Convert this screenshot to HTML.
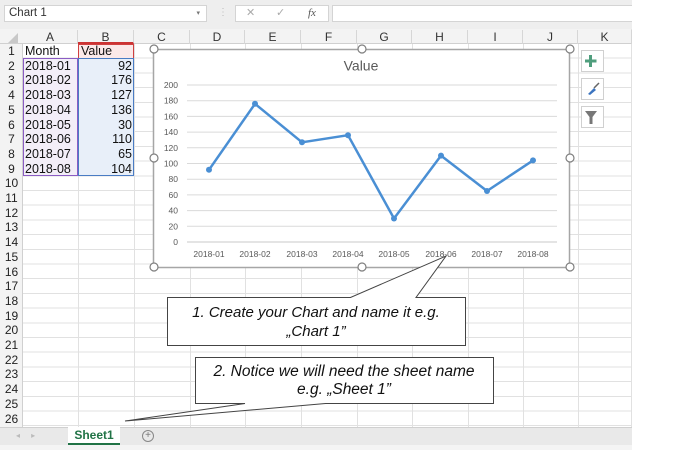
<!DOCTYPE html>
<html><head><meta charset="utf-8"><style>
*{margin:0;padding:0;box-sizing:border-box}
body{width:700px;height:450px;background:#fff;position:relative;overflow:hidden;font-family:"Liberation Sans",Arial,sans-serif}
.a{position:absolute}
.ch{position:absolute;top:30px;height:14px;font-size:12px;color:#333;text-align:center;line-height:14px;border-right:1px solid #d6d6d6}
.rh{position:absolute;left:0;width:23px;font-size:12px;color:#222;text-align:center;line-height:14.7px;height:14.7px}
.c{position:absolute;font-size:12.5px;color:#111;line-height:14.7px;height:14.7px}
</style></head><body>
<div class="a" style="left:0;top:0;width:632px;height:30px;background:#eeeeee"></div>
<div class="a" style="left:4px;top:5px;width:203px;height:17px;background:#fff;border:1px solid #d4d4d4;font-size:11.5px;line-height:15px;padding-left:4px;color:#333">Chart 1<span style="position:absolute;right:6px;font-size:7px;color:#777">▾</span></div>
<div class="a" style="left:218px;top:7px;font-size:10px;color:#bbb">⋮</div>
<div class="a" style="left:235px;top:5px;width:94px;height:17px;background:#fff;border:1px solid #d4d4d4;font-size:11px;color:#aaa;line-height:15px"><span style="position:absolute;left:10px">✕</span><span style="position:absolute;left:40px">✓</span><span style="position:absolute;left:72px;font-family:'Liberation Serif',serif;font-style:italic;color:#555">fx</span></div>
<div class="a" style="left:332px;top:5px;width:300px;height:17px;background:#fff;border:1px solid #d4d4d4;border-right:none"></div>
<div class="a" style="left:0;top:29px;width:632px;height:15px;background:#f3f3f3;border-bottom:1px solid #d0d0d0"></div>
<div class="a" style="left:0;top:44px;width:23px;height:383px;background:#f3f3f3;border-right:1px solid #d0d0d0"></div>
<div class="a" style="left:23px;top:44px;width:609px;height:383px;background-image:repeating-linear-gradient(to bottom,transparent 0,transparent 13.7px,#e1e1e1 13.7px,#e1e1e1 14.7px)"></div>
<div class="a" style="left:78px;top:44px;width:1px;height:383px;background:#e1e1e1"></div>
<div class="a" style="left:134px;top:44px;width:1px;height:383px;background:#e1e1e1"></div>
<div class="a" style="left:190px;top:44px;width:1px;height:383px;background:#e1e1e1"></div>
<div class="a" style="left:245px;top:44px;width:1px;height:383px;background:#e1e1e1"></div>
<div class="a" style="left:301px;top:44px;width:1px;height:383px;background:#e1e1e1"></div>
<div class="a" style="left:357px;top:44px;width:1px;height:383px;background:#e1e1e1"></div>
<div class="a" style="left:412px;top:44px;width:1px;height:383px;background:#e1e1e1"></div>
<div class="a" style="left:468px;top:44px;width:1px;height:383px;background:#e1e1e1"></div>
<div class="a" style="left:523px;top:44px;width:1px;height:383px;background:#e1e1e1"></div>
<div class="a" style="left:578px;top:44px;width:1px;height:383px;background:#e1e1e1"></div>
<div class="a" style="left:631px;top:29px;width:1px;height:398px;background:#e1e1e1"></div>
<div class="a" style="left:8px;top:33px;width:0;height:0;border-left:10px solid transparent;border-bottom:10px solid #c8c8c8"></div>
<div class="ch" style="left:23px;width:55px">A</div><div class="ch" style="left:78px;width:56px;border-bottom:2px solid #c33">B</div>
<div class="ch" style="left:134px;width:56px">C</div><div class="ch" style="left:190px;width:55px">D</div>
<div class="ch" style="left:245px;width:56px">E</div><div class="ch" style="left:301px;width:56px">F</div>
<div class="ch" style="left:357px;width:55px">G</div><div class="ch" style="left:412px;width:56px">H</div>
<div class="ch" style="left:468px;width:55px">I</div><div class="ch" style="left:523px;width:55px">J</div>
<div class="ch" style="left:578px;width:54px">K</div>
<div class="rh" style="top:44px">1</div><div class="rh" style="top:58.7px">2</div><div class="rh" style="top:73.4px">3</div><div class="rh" style="top:88.1px">4</div><div class="rh" style="top:102.8px">5</div><div class="rh" style="top:117.5px">6</div><div class="rh" style="top:132.2px">7</div><div class="rh" style="top:146.9px">8</div><div class="rh" style="top:161.6px">9</div><div class="rh" style="top:176.3px">10</div><div class="rh" style="top:191px">11</div><div class="rh" style="top:205.7px">12</div><div class="rh" style="top:220.4px">13</div><div class="rh" style="top:235.1px">14</div><div class="rh" style="top:249.8px">15</div><div class="rh" style="top:264.5px">16</div><div class="rh" style="top:279.2px">17</div><div class="rh" style="top:293.9px">18</div><div class="rh" style="top:308.6px">19</div><div class="rh" style="top:323.3px">20</div><div class="rh" style="top:338px">21</div><div class="rh" style="top:352.7px">22</div><div class="rh" style="top:367.4px">23</div><div class="rh" style="top:382.1px">24</div><div class="rh" style="top:396.8px">25</div><div class="rh" style="top:411.5px">26</div>
<div class="a" style="left:23px;top:58px;width:55px;height:118px;background:#f3eef8;border:1px solid #8b5cc4"></div>
<div class="a" style="left:78px;top:44px;width:56px;height:15px;background:#fbe9e9;border:1px solid #d04040"></div>
<div class="a" style="left:78px;top:58px;width:56px;height:118px;background:#e8eff9;border:1px solid #4a7cc4"></div>
<div class="c" style="left:25px;top:44px">Month</div><div class="c" style="left:81px;top:44px">Value</div>
<div class="c" style="left:25px;top:58.7px">2018-01</div><div class="c" style="left:25px;top:73.4px">2018-02</div><div class="c" style="left:25px;top:88.1px">2018-03</div><div class="c" style="left:25px;top:102.8px">2018-04</div><div class="c" style="left:25px;top:117.5px">2018-05</div><div class="c" style="left:25px;top:132.2px">2018-06</div><div class="c" style="left:25px;top:146.9px">2018-07</div><div class="c" style="left:25px;top:161.6px">2018-08</div>
<div class="c" style="left:80px;width:52px;text-align:right;top:58.7px">92</div><div class="c" style="left:80px;width:52px;text-align:right;top:73.4px">176</div><div class="c" style="left:80px;width:52px;text-align:right;top:88.1px">127</div><div class="c" style="left:80px;width:52px;text-align:right;top:102.8px">136</div><div class="c" style="left:80px;width:52px;text-align:right;top:117.5px">30</div><div class="c" style="left:80px;width:52px;text-align:right;top:132.2px">110</div><div class="c" style="left:80px;width:52px;text-align:right;top:146.9px">65</div><div class="c" style="left:80px;width:52px;text-align:right;top:161.6px">104</div>
<svg class="a" style="left:0;top:0" width="700" height="450" font-family="Liberation Sans,Arial,sans-serif">
<rect x="153.5" y="49.5" width="416" height="218" fill="#fff" stroke="#a6a6a6" stroke-width="1.5"/>
<text x="361" y="70.5" font-size="14" fill="#595959" text-anchor="middle">Value</text>
<g stroke="#dadada" stroke-width="1">
<line x1="187" x2="557" y1="85" y2="85"/><line x1="187" x2="557" y1="100.7" y2="100.7"/><line x1="187" x2="557" y1="116.4" y2="116.4"/><line x1="187" x2="557" y1="132.1" y2="132.1"/><line x1="187" x2="557" y1="147.8" y2="147.8"/><line x1="187" x2="557" y1="163.5" y2="163.5"/><line x1="187" x2="557" y1="179.2" y2="179.2"/><line x1="187" x2="557" y1="194.9" y2="194.9"/><line x1="187" x2="557" y1="210.6" y2="210.6"/><line x1="187" x2="557" y1="226.3" y2="226.3"/><line x1="187" x2="557" y1="242" y2="242" stroke="#c8c8c8"/>
</g>
<g font-size="8.5" fill="#595959" text-anchor="end">
<text x="178" y="88">200</text><text x="178" y="103.7">180</text><text x="178" y="119.4">160</text><text x="178" y="135.1">140</text><text x="178" y="150.8">120</text><text x="178" y="166.5">100</text><text x="178" y="182.2">80</text><text x="178" y="197.9">60</text><text x="178" y="213.6">40</text><text x="178" y="229.3">20</text><text x="178" y="245">0</text>
</g>
<g font-size="8.5" fill="#595959" text-anchor="middle">
<text x="209" y="257">2018-01</text><text x="255" y="257">2018-02</text><text x="302" y="257">2018-03</text><text x="348" y="257">2018-04</text><text x="394" y="257">2018-05</text><text x="441" y="257">2018-06</text><text x="487" y="257">2018-07</text><text x="533" y="257">2018-08</text>
</g>
<polyline fill="none" stroke="#4a8fd4" stroke-width="2.5" stroke-linejoin="round" points="209,169.8 255,103.8 302,142.3 348,135.2 394,218.5 441,155.6 487,191 533,160.4"/>
<g fill="#4a8fd4"><circle cx="209" cy="169.8" r="3"/><circle cx="255" cy="103.8" r="3"/><circle cx="302" cy="142.3" r="3"/><circle cx="348" cy="135.2" r="3"/><circle cx="394" cy="218.5" r="3"/><circle cx="441" cy="155.6" r="3"/><circle cx="487" cy="191" r="3"/><circle cx="533" cy="160.4" r="3"/></g>
<g fill="#fff" stroke="#7f7f7f" stroke-width="1.2">
<circle cx="154" cy="49" r="4"/><circle cx="362" cy="49" r="4"/><circle cx="570" cy="49" r="4"/><circle cx="154" cy="158" r="4"/><circle cx="570" cy="158" r="4"/><circle cx="154" cy="267" r="4"/><circle cx="362" cy="267" r="4"/><circle cx="570" cy="267" r="4"/>
</g>
<g fill="#fff" stroke="#d0d0d0"><rect x="581.5" y="50.5" width="22" height="21"/><rect x="581.5" y="78.5" width="22" height="21"/><rect x="581.5" y="106.5" width="22" height="21"/></g>
<path d="M590.5 55v12M585 61h11.5" stroke="#4f9e7d" stroke-width="3"/>
<path d="M588 94l6-6 2 2-6 5z" fill="#3b74c0"/><path d="M594 88l5-5" stroke="#666" stroke-width="1.5"/>
<path d="M585 111h12l-4.5 6v7h-3v-7z" fill="#777"/>
<path d="M167.5 297.5h183L446 256l-30 41.5h49.5v48h-298z" fill="#fff" stroke="#444" stroke-width="1"/>
<path d="M195.5 357.5h298v46h-168L125 421l120-17.5h-49.5z" fill="#fff" stroke="#444" stroke-width="1"/>
<g font-size="15" font-style="italic" fill="#111" text-anchor="middle">
<text x="316" y="317">1. Create your Chart and name it e.g.</text>
<text x="316" y="336">„Chart 1”</text>
<text x="344" y="376" font-size="15.5">2. Notice we will need the sheet name</text>
<text x="344" y="394" font-size="15.5">e.g. „Sheet 1”</text>
</g>
</svg>
<div class="a" style="left:0;top:427px;width:632px;height:18px;background:#e9e9e9;border-top:1px solid #d0d0d0"></div>
<div class="a" style="left:16px;top:431px;font-size:8px;color:#bbb">◂ &nbsp; &nbsp; ▸</div>
<div class="a" style="left:68px;top:427px;width:52px;height:18px;background:#fff;border-bottom:2px solid #217346;font-size:12px;font-weight:bold;color:#217346;text-align:center;line-height:16px">Sheet1</div>
<div class="a" style="left:142px;top:430px;width:12px;height:12px;border:1px solid #888;border-radius:50%;font-size:10px;line-height:10px;text-align:center;color:#777">+</div>
<div class="a" style="left:0;top:445px;width:632px;height:5px;background:#f4f4f4"></div>
</body></html>
